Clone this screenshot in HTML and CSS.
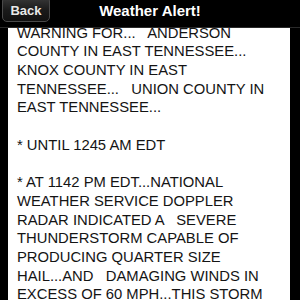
FILE: index.html
```html
<!DOCTYPE html>
<html lang="en">
<head>
  <meta charset="UTF-8">
  <title>Weather Alert!</title>
  <meta name="viewport" content="width=device-width, initial-scale=1.0">
  <link rel="stylesheet" href="styles.css">
</head>
<body>
  <div class="navbar">
    <button class="back-btn">Back</button>
    <h1>Weather Alert!</h1>
    <span></span>
  </div>
  <div class="alert-panel">
    <p class="alert-text">WARNING FOR...   ANDERSON COUNTY IN EAST TENNESSEE... KNOX COUNTY IN EAST TENNESSEE...   UNION COUNTY IN EAST TENNESSEE...

* UNTIL 1245 AM EDT

* AT 1142 PM EDT...NATIONAL WEATHER SERVICE DOPPLER RADAR INDICATED A   SEVERE THUNDERSTORM CAPABLE OF PRODUCING QUARTER SIZE HAIL...AND   DAMAGING WINDS IN EXCESS OF 60 MPH...THIS STORM WAS LOCATED NEAR CLINTON...MOVING EAST AT 35 MPH.</p>
  </div>
</body>
</html>
```

FILE: styles.css
```css
html, body {
  margin: 0;
  height: 100%;
}
body {
  background: #000;
  font-family: "Liberation Sans", Arial, sans-serif;
  overflow: hidden;
  display: flex;
  flex-direction: column;
}
.navbar {
  height: 27px;
  border-bottom: 1px solid #2a2a2a;
  display: grid;
  grid-template-columns: 1fr auto 1fr;
  align-items: start;
  flex-shrink: 0;
}
.navbar h1 {
  margin: 0;
  color: #fff;
  font-size: 15px;
  font-weight: bold;
  line-height: 22px;
}
.back-btn {
  justify-self: start;
  margin: -4px 0 0 2px;
  width: 48px;
  height: 26px;
  padding: 3px 0 0;
  background: linear-gradient(#3a3a3a, #1a1a1a 55%, #111);
  border: 1px solid #4a4a4a;
  border-radius: 5px;
  color: #e8e8e8;
  font-family: "Liberation Sans", Arial, sans-serif;
  font-size: 13px;
  font-weight: bold;
}
.alert-panel {
  flex: 1;
  margin: 0 10px 0 8px;
  background: #fff;
  overflow: hidden;
  padding: 0 14px 0 9px;
}
.alert-text {
  margin: -4.4px 0 0;
  color: #141414;
  font-size: 14.8px;
  line-height: 18.7px;
  white-space: pre-wrap;
}
```
